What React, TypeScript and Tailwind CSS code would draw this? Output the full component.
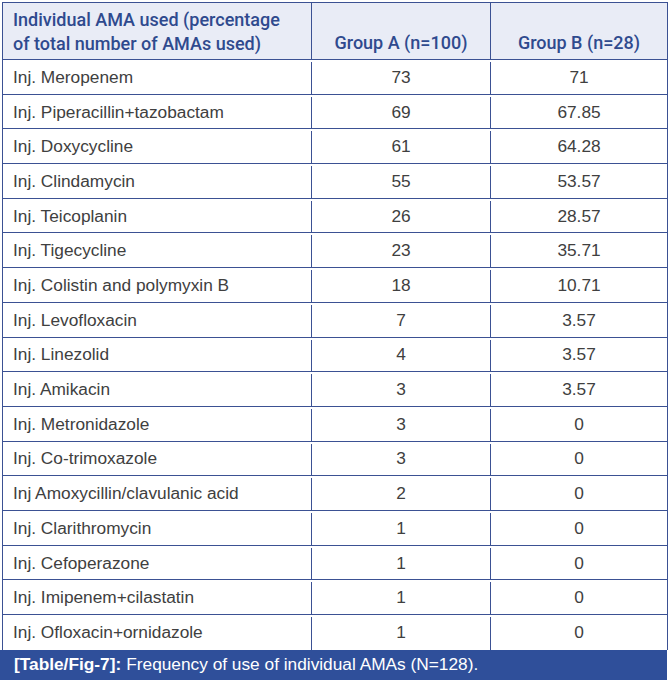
import React from 'react';

const rows: [string, string, string][] = [
  ['Inj. Meropenem', '73', '71'],
  ['Inj. Piperacillin+tazobactam', '69', '67.85'],
  ['Inj. Doxycycline', '61', '64.28'],
  ['Inj. Clindamycin', '55', '53.57'],
  ['Inj. Teicoplanin', '26', '28.57'],
  ['Inj. Tigecycline', '23', '35.71'],
  ['Inj. Colistin and polymyxin B', '18', '10.71'],
  ['Inj. Levofloxacin', '7', '3.57'],
  ['Inj. Linezolid', '4', '3.57'],
  ['Inj. Amikacin', '3', '3.57'],
  ['Inj. Metronidazole', '3', '0'],
  ['Inj. Co-trimoxazole', '3', '0'],
  ['Inj Amoxycillin/clavulanic acid', '2', '0'],
  ['Inj. Clarithromycin', '1', '0'],
  ['Inj. Cefoperazone', '1', '0'],
  ['Inj. Imipenem+cilastatin', '1', '0'],
  ['Inj. Ofloxacin+ornidazole', '1', '0'],
];

const App = () => {
  return (
    <div className="w-[670px] h-[686px] bg-white pt-[2px] pl-[2px] font-['Liberation_Sans',Arial,sans-serif]">
      <div className="w-[666px] border-l-[1.5px] border-r-[1.5px] border-t-[1.5px] border-[#3b5193]">
        <div className="grid grid-cols-[309px_179px_1fr] h-[57px] bg-[#e9ecf6] text-[#2f4a8e] text-[18px] leading-[24px] border-b-[1.5px] border-[#3b5193] font-['Roboto',Arial,sans-serif] font-medium">
          <div className="pl-[10px] pt-[5px] border-r-[1.5px] border-[#3b5193]">
            Individual AMA used (percentage
            <br />
            of total number of AMAs used)
          </div>
          <div className="flex items-end justify-center pb-[4px] border-r-[1.5px] border-[#3b5193]">
            Group A (n=100)
          </div>
          <div className="flex items-end justify-center pb-[4px]">Group B (n=28)</div>
        </div>
        {rows.map(([name, a, b], i) => (
          <div
            key={name}
            className={`grid grid-cols-[309px_179px_1fr] h-[34.7px] pt-[2px] text-[17.3px] text-[#404040] ${
              i < rows.length - 1 ? 'border-b-[1.5px] border-[#3b5193]' : ''
            }`}>
            <div className="flex items-center pl-[10px] border-r-[1.5px] border-[#3b5193]">{name}</div>
            <div className="flex items-center justify-center border-r-[1.5px] border-[#3b5193]">{a}</div>
            <div className="flex items-center justify-center">{b}</div>
          </div>
        ))}
      </div>
      <div className="w-[667px] h-[30px] -ml-[2px] bg-[#2f4f9a] text-white text-[17.3px] flex items-center pl-[14px]">
        <span className="font-bold">[Table/Fig-7]:</span>
        <span className="ml-[5px]">Frequency of use of individual AMAs (N=128).</span>
      </div>
    </div>
  );
};

export default App;
